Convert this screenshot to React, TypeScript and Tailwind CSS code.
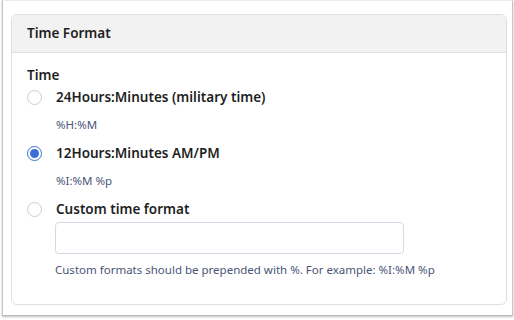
import React, { useState } from 'react';

const options = [
  { id: '24', label: '24Hours:Minutes (military time)', hint: '%H:%M' },
  { id: '12', label: '12Hours:Minutes AM/PM', hint: '%I:%M %p' },
  { id: 'custom', label: 'Custom time format', hint: '' },
];

function Radio({ checked }: { checked: boolean }) {
  return checked ? (
    <span className="flex h-[15px] w-[15px] shrink-0 items-center justify-center rounded-full border-[1.5px] border-[#3b6fd6] bg-white">
      <span className="h-[9px] w-[9px] rounded-full bg-[#3b6fd6]" />
    </span>
  ) : (
    <span className="h-[15px] w-[15px] shrink-0 rounded-full border border-[#c9cdd6] bg-white" />
  );
}

function App() {
  const [selected, setSelected] = useState('12');
  const [custom, setCustom] = useState('');

  return (
    <div className="h-[320px] w-[514px] overflow-hidden bg-white font-['Noto_Sans',sans-serif]">
      <div className="ml-[2px] h-[316px] w-[511px] border-b border-l border-r border-t border-b-[#b8b8b8] border-l-[#c4c4c4] border-r-[#c4c4c4] border-t-[#ececec] bg-white pl-[8px] pr-[5px] pt-[13px] shadow-[0_1px_2px_rgba(0,0,0,0.25)]">
        <div className="h-[291px] overflow-hidden rounded-[6px] border border-[#dcdfe8]">
          <div className="flex h-[38px] items-center border-b border-[#dcdfe8] bg-[#f2f2f2] px-[15px]">
            <h2 className="text-[13.5px] font-semibold text-[#1f1f1f]">Time Format</h2>
          </div>
          <div className="px-[15px] pt-[12px]">
            <div className="text-[13.5px] font-semibold leading-[20px] text-[#1f1f1f]">Time</div>
            <div className="flex flex-col">
              {options.map((o) => (
                <div key={o.id}>
                  <label
                    className="flex h-[24px] cursor-pointer items-center gap-[14px]"
                    onClick={() => setSelected(o.id)}
                  >
                    <Radio checked={selected === o.id} />
                    <span className="text-[13.5px] font-semibold text-[#1f1f1f]">{o.label}</span>
                  </label>
                  {o.hint && (
                    <div className="flex h-[32px] items-center pl-[29px] text-[11.5px] text-[#4a5578]">
                      {o.hint}
                    </div>
                  )}
                </div>
              ))}
            </div>
            <div className="pl-[28px] pt-[1px]">
              <input
                value={custom}
                onChange={(e) => setCustom(e.target.value)}
                className="h-[32px] w-[349px] rounded-[4px] border border-[#d5d9e6] px-2 text-[13px] outline-none"
              />
              <p className="mt-[7px] text-[11.5px] text-[#4a5578]">
                Custom formats should be prepended with %. For example: %I:%M %p
              </p>
            </div>
          </div>
        </div>
      </div>
    </div>
  );
}

export default App;
